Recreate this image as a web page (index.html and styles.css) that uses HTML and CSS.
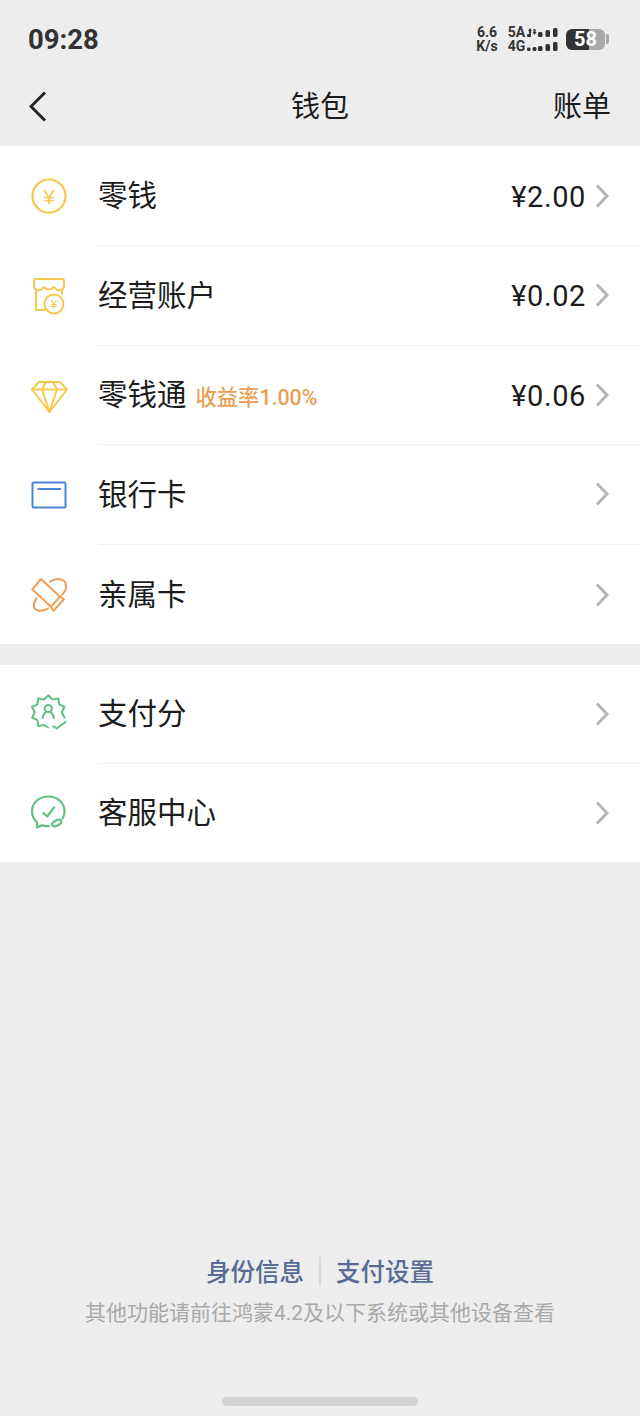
FILE: index.html
```html
<!DOCTYPE html>
<html lang="zh-CN">
<head>
  <meta charset="UTF-8" />
  <meta name="viewport" content="width=device-width, initial-scale=1" />
  <title>钱包</title>
  <link rel="stylesheet" href="styles.css">
</head>
<body>
  <div class="page">
    <div class="status-bar">
      <span class="clock">09:28</span>
      <div class="status-right">
        <span class="speed">6.6<br>K/s</span>
        <span class="net">5A<br>4G</span>
        <svg class="signal" width="31" height="23" viewBox="0 0 31 23">
          <g fill="#333">
            <path d="M3 0l2 3H4v3H2V3H1zM7.500 7L5.500 4h1V1h2v3h1z"/>
            <rect x="0" y="6" width="4" height="3" rx="1"/>
            <rect x="11" y="4" width="4.500" height="5" rx="1.500"/>
            <rect x="18.500" y="2" width="4.500" height="7" rx="1.500"/>
            <rect x="26" y="0" width="4.500" height="9" rx="1.500"/>
            <rect x="0" y="19.500" width="3.500" height="3.500" rx="1.200"/>
            <rect x="5.500" y="19" width="4" height="4" rx="1.500"/>
            <rect x="11" y="18" width="4.500" height="5" rx="1.500"/>
            <rect x="18.500" y="16" width="4.500" height="7" rx="1.500"/>
            <rect x="26" y="14" width="4.500" height="9" rx="1.500"/>
          </g>
        </svg>
        <div class="battery"><span class="battery-level">58</span><span class="battery-tip"></span></div>
      </div>
    </div>

    <div class="nav-bar">
      <svg class="back" width="18" height="31" viewBox="0 0 18 31"><path d="M16 1.500L2 15.500l14 14" fill="none" stroke="#222" stroke-width="3"/></svg>
      <span class="nav-title">钱包</span>
      <span class="nav-action">账单</span>
    </div>

    <div class="group">
      <div class="row">
        <svg class="icon" viewBox="0 0 40 40">
          <circle cx="20" cy="20" r="16.500" fill="none" stroke="#f5c94f" stroke-width="2.200"/>
          <text x="20" y="27.500" text-anchor="middle" class="icon-yen">¥</text>
        </svg>
        <div class="row-body">
          <span class="label">零钱</span>
          <span class="amount">¥2.00</span>
          <svg class="chevron" width="14" height="24" viewBox="0 0 14 24"><path d="M2 1.500L12 12 2 22.500"/></svg>
        </div>
      </div>
      <div class="row">
        <svg class="icon" viewBox="0 0 40 40">
          <g fill="none" stroke="#f5c94f" stroke-width="2" stroke-linejoin="round" stroke-linecap="round">
            <path d="M7 3h26q2 0 2 2v5q0 3-3 4-4 1-7-3-5 5-10 0-3 4-7 3-3-1-3-4V5q0-2 2-2z"/>
            <path d="M7 14.500V34h9M33 14.500V18"/>
            <circle cx="25" cy="28" r="9.500"/>
          </g>
          <text x="25" y="32.500" text-anchor="middle" class="icon-yen-small">¥</text>
        </svg>
        <div class="row-body">
          <span class="label">经营账户</span>
          <span class="amount">¥0.02</span>
          <svg class="chevron" width="14" height="24" viewBox="0 0 14 24"><path d="M2 1.500L12 12 2 22.500"/></svg>
        </div>
      </div>
      <div class="row">
        <svg class="icon" viewBox="0 0 40 40">
          <g fill="none" stroke="#f5c94f" stroke-width="2" stroke-linejoin="round">
            <path d="M10 7h21l7 7.500L20.500 37 3 14.500z"/>
            <path d="M3 14.500h35M17 7l-4 7.500L20.500 37 28 14.500 24 7"/>
          </g>
        </svg>
        <div class="row-body">
          <span class="label">零钱通</span>
          <span class="tag">收益率1.00%</span>
          <span class="amount">¥0.06</span>
          <svg class="chevron" width="14" height="24" viewBox="0 0 14 24"><path d="M2 1.500L12 12 2 22.500"/></svg>
        </div>
      </div>
      <div class="row">
        <svg class="icon" viewBox="0 0 40 40">
          <rect x="3.500" y="7.500" width="33" height="25" rx="1" fill="none" stroke="#4a86d8" stroke-width="2"/>
          <path d="M8.500 14H32" stroke="#4a86d8" stroke-width="2"/>
        </svg>
        <div class="row-body">
          <span class="label">银行卡</span>
          <svg class="chevron" width="14" height="24" viewBox="0 0 14 24"><path d="M2 1.500L12 12 2 22.500"/></svg>
        </div>
      </div>
      <div class="row row-last">
        <svg class="icon" viewBox="0 0 40 40">
          <g fill="none" stroke="#ee9f55" stroke-width="2" stroke-linejoin="round" stroke-linecap="round">
            <path d="M12 4L3.300 14.300 22 31.700 31 21.700z"/>
            <path d="M31 21.700l4 2.600-10.700 11.400L22 31.700"/>
            <path d="M21 6.700C27 2.500 36 3 37 10c.5 4-1.500 7.500-4.300 10"/>
            <path d="M7.700 23.300C3.500 28 4 34 9 35.500c3.500 1 7-.3 10.300-2.200"/>
          </g>
        </svg>
        <div class="row-body">
          <span class="label">亲属卡</span>
          <svg class="chevron" width="14" height="24" viewBox="0 0 14 24"><path d="M2 1.500L12 12 2 22.500"/></svg>
        </div>
      </div>
    </div>

    <div class="group group-second">
      <div class="row">
        <svg class="icon" viewBox="0 0 40 40">
          <g fill="none" stroke="#63bf7f" stroke-width="2" stroke-linejoin="round" stroke-linecap="round">
            <path d="M35.500 23.600L32.800 18.300 35.500 13 30.200 10.400 29.300 4.500 23.500 5.500 19.300 1.300 15.100 5.500 9.300 4.500 8.400 10.400 3.100 13 5.800 18.300 3.100 23.600 8.400 26.200 9.300 32.100 15.100 31.100 19 33.500"/>
            <circle cx="19.300" cy="14.500" r="3.600"/>
            <path d="M13.500 24c.5-3 2-5 3.500-6.500M25 24c-.5-3-2-5-3.500-6.500"/>
            <path d="M24.300 32.200l3.400 2.300 9-6.800"/>
          </g>
        </svg>
        <div class="row-body">
          <span class="label">支付分</span>
          <svg class="chevron" width="14" height="24" viewBox="0 0 14 24"><path d="M2 1.500L12 12 2 22.500"/></svg>
        </div>
      </div>
      <div class="row row-last">
        <svg class="icon" viewBox="0 0 40 40">
          <g fill="none" stroke="#63bf7f" stroke-width="2.200" stroke-linejoin="round" stroke-linecap="round">
            <path d="M20 33c-2.500.2-5 0-7-.8L8 34.500V29C4.800 26.500 3 22.500 3 18.300 3 10 10 3.500 19.300 3.500S35.500 10 35.500 18.300c0 2.700-.7 5.200-2 7.200"/>
            <ellipse cx="27.700" cy="30" rx="5" ry="2.600" transform="rotate(-28 27.700 30)"/>
            <path d="M14.300 20l4 3.300 7-9"/>
          </g>
        </svg>
        <div class="row-body">
          <span class="label">客服中心</span>
          <svg class="chevron" width="14" height="24" viewBox="0 0 14 24"><path d="M2 1.500L12 12 2 22.500"/></svg>
        </div>
      </div>
    </div>

    <div class="footer">
      <div class="footer-links">
        <a class="footer-link">身份信息</a>
        <span class="footer-sep"></span>
        <a class="footer-link">支付设置</a>
      </div>
      <p class="footer-note">其他功能请前往鸿蒙4.2及以下系统或其他设备查看</p>
      <div class="home-indicator"></div>
    </div>
  </div>
</body>
</html>
```

FILE: styles.css
```css
/* Reset & base */
* {
  box-sizing: border-box;
}
body {
  margin: 0;
  background: #ededed;
  color: #1c1c1c;
  font-family: Roboto, "Noto Sans CJK SC", sans-serif;
}
.page {
  display: flex;
  flex-direction: column;
  min-height: 1416px;
}

/* Status bar */
.status-bar {
  display: flex;
  justify-content: space-between;
  align-items: center;
  height: 72px;
  padding: 6px 31px 0 28px;
}
.clock {
  font-size: 27.5px;
  font-weight: 700;
  color: #333;
}
.status-right {
  display: flex;
  align-items: center;
}
.speed,
.net {
  font-size: 14px;
  font-weight: 700;
  line-height: 14px;
  color: #333;
  text-align: center;
}
.speed {
  width: 22px;
  margin-right: 9px;
}
.net {
  width: 19px;
  margin-right: 1px;
}
.signal {
  margin-right: 8px;
}
.battery {
  display: flex;
  align-items: center;
}
.battery-level {
  width: 39px;
  height: 21px;
  border-radius: 6px;
  background: linear-gradient(90deg, #333 58%, #a9a9a9 58%);
  color: #fff;
  font-size: 20px;
  font-weight: 700;
  line-height: 21px;
  text-align: center;
}
.battery-tip {
  width: 3px;
  height: 10px;
  margin-left: 1px;
  border-radius: 0 2px 2px 0;
  background: #a9a9a9;
}

/* Nav */
.nav-bar {
  display: grid;
  grid-template-columns: 1fr auto 1fr;
  align-items: center;
  height: 74.4px;
  padding: 0 29px 6.4px;
}
.nav-title,
.nav-action {
  font-size: 29px;
  padding-bottom: 4px;
}
.nav-action {
  justify-self: end;
}

/* Lists */
.group {
  background: #fff;
}
.group-second {
  margin-top: 20.6px;
}
.row {
  display: flex;
  align-items: center;
  height: 99.6px;
  padding-left: 29px;
}
.group-second .row {
  height: 98.6px;
}
.icon {
  flex: none;
  width: 40px;
  height: 40px;
  margin-right: 29px;
}
.icon-yen {
  font-family: "Liberation Sans", sans-serif;
  font-size: 21px;
  fill: #f5c94f;
}
.icon-yen-small {
  font-family: "Liberation Sans", sans-serif;
  font-size: 12px;
  fill: #f5c94f;
}
.row-body {
  flex: 1;
  display: flex;
  align-items: center;
  align-self: stretch;
  padding-right: 31px;
  border-bottom: 1px solid #f1f1f1;
}
.row-last .row-body {
  border-bottom: none;
}
.label {
  padding-bottom: 5px;
  font-size: 29.5px;
}
.tag {
  margin-left: 9px;
  padding-top: 2px;
  font-size: 21.3px;
  font-weight: 500;
  color: #eb9f53;
}
.amount {
  margin-left: auto;
  margin-right: 9px;
  padding-top: 2px;
  font-size: 29px;
  letter-spacing: 0.6px;
}
.chevron {
  flex: none;
  margin-left: auto;
}
.amount + .chevron {
  margin-left: 0;
}
.chevron path {
  fill: none;
  stroke: #b4b4b4;
  stroke-width: 3;
}

/* Footer */
.footer {
  flex: 1;
  display: flex;
  flex-direction: column;
  align-items: center;
  justify-content: flex-end;
  padding-bottom: 10px;
}
.footer-links {
  display: flex;
  align-items: center;
  gap: 15px;
}
.footer-link {
  font-size: 24.5px;
  font-weight: 500;
  color: #576b95;
}
.footer-sep {
  width: 2px;
  height: 28px;
  background: #d9d9d9;
}
.footer-note {
  margin: 8px 0 71px;
  font-size: 21px;
  color: #a9a9a9;
}
.home-indicator {
  width: 196px;
  height: 9px;
  border-radius: 5px;
  background: #d2d2d2;
}
```
